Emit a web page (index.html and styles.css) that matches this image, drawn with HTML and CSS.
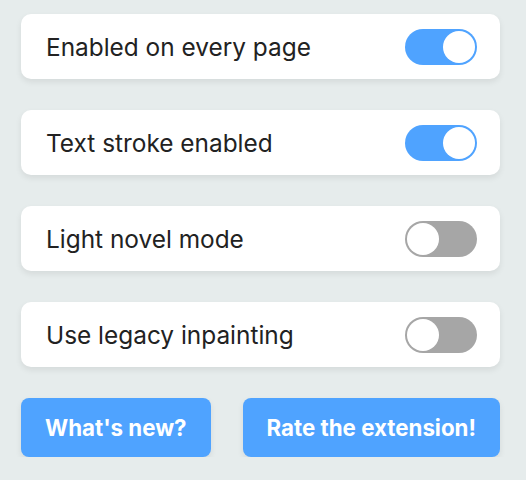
FILE: index.html
```html
<!DOCTYPE html>
<html>
<head>
<meta charset="utf-8">
<link rel="stylesheet" href="styles.css">
</head>
<body>
<div class="panel">
  <div class="card">
    <span class="label">Enabled on every page</span>
    <span class="toggle on"><span class="knob"></span></span>
  </div>
  <div class="card">
    <span class="label">Text stroke enabled</span>
    <span class="toggle on"><span class="knob"></span></span>
  </div>
  <div class="card">
    <span class="label">Light novel mode</span>
    <span class="toggle"><span class="knob"></span></span>
  </div>
  <div class="card">
    <span class="label">Use legacy inpainting</span>
    <span class="toggle"><span class="knob"></span></span>
  </div>
  <div class="actions">
    <button class="btn">What's new?</button>
    <button class="btn">Rate the extension!</button>
  </div>
</div>
</body>
</html>
```
FILE: styles.css
```css
html, body {
  margin: 0;
  padding: 0;
  background: #e6ecec;
}
body {
  font-family: Inter, "Liberation Sans", sans-serif;
}
.panel {
  display: flex;
  flex-direction: column;
  gap: 31px;
  padding: 14px 26px 0 21px;
}
.card {
  height: 65px;
  box-sizing: border-box;
  background: #fff;
  border-radius: 10px;
  box-shadow: 0 3px 6px rgba(0, 0, 0, 0.08);
  display: flex;
  align-items: center;
  justify-content: space-between;
  padding: 0 23px 0 25px;
}
.label {
  font-size: 24.4px;
  color: #222;
}
.toggle {
  width: 72px;
  height: 36px;
  box-sizing: border-box;
  padding: 2px;
  border-radius: 18px;
  background: #a6a6a6;
  display: flex;
  justify-content: flex-start;
}
.toggle.on {
  background: #4fa3ff;
  justify-content: flex-end;
}
.knob {
  width: 32px;
  height: 32px;
  border-radius: 50%;
  background: #fff;
}
.actions {
  display: flex;
  justify-content: space-between;
}
.btn {
  height: 59px;
  border: none;
  border-radius: 8px;
  background: #4fa3ff;
  color: #fff;
  font-family: Inter, "Liberation Sans", sans-serif;
  font-weight: 700;
  font-size: 22.3px;
  padding: 0 24px;
  box-shadow: 0 3px 6px rgba(0, 0, 0, 0.08);
}
```
